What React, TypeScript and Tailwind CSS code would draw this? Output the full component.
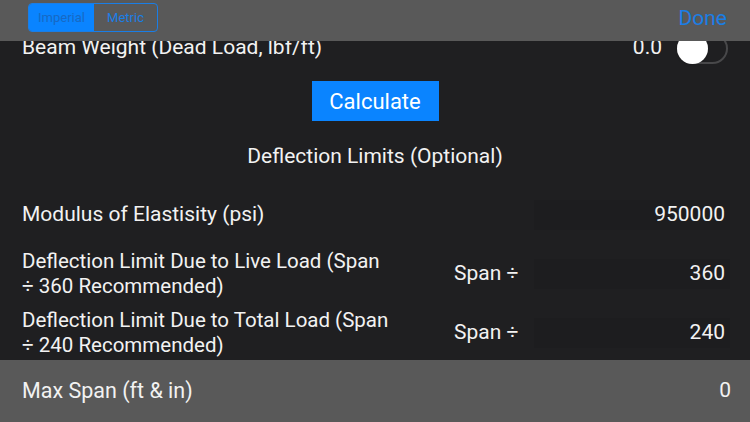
import React from 'react'

const font = { fontFamily: 'Roboto, "Liberation Sans", sans-serif' }

function Toggle() {
  return (
    <div className="relative w-[51px] h-[31px] rounded-full border-2 border-[#48484a] bg-[#1f1f21]">
      <div className="absolute left-[-2px] top-[-2px] w-[31px] h-[31px] rounded-full bg-white shadow" />
    </div>
  )
}

function InputBox({ value }: { value: string }) {
  return (
    <div className="w-[196px] h-[30px] bg-[#1d1d1f] flex items-center justify-end pr-[5px]">
      {value}
    </div>
  )
}

function LimitRow({ line1, line2, value, className }: { line1: string; line2: string; value: string; className?: string }) {
  return (
    <div className={`flex items-center ${className ?? ''}`}>
      <div className="w-[432px] leading-[25px] text-[20.5px]">
        {line1}
        <br />
        {line2}
      </div>
      <div className="w-[80px]">Span ÷</div>
      <InputBox value={value} />
    </div>
  )
}

export default function App() {
  return (
    <div className="w-[750px] h-[422px] flex flex-col text-[21px] text-[#f2f2f2] overflow-hidden" style={font}>
      <div className="h-[41px] bg-[#595959] flex items-start justify-between pl-[28px] pr-[23px] pt-[3px] z-10">
        <div className="flex h-[29px] rounded-[4px] border border-[#1a7ee6] overflow-hidden text-[13px]">
          <div className="w-[65px] bg-[#0a84ff] text-[#1769c4] flex items-center justify-center">Imperial</div>
          <div className="w-[63px] text-[#1a7ee6] flex items-center justify-center">Metric</div>
        </div>
        <div className="text-[#1a7ee6] text-[21px] leading-[30px]">Done</div>
      </div>

      <div className="flex-1 bg-[#1f1f21] overflow-hidden pl-[22px] pr-[20px]">
        <div className="mt-[-10px] h-[34px] flex items-center justify-between">
          <span>Beam Weight (Dead Load, lbf/ft)</span>
          <div className="flex items-center gap-[15px] mr-[2px]">
            <span>0.0</span>
            <Toggle />
          </div>
        </div>

        <div className="mt-[16px] flex justify-center pr-[2px]">
          <button className="w-[127px] h-[40px] bg-[#0a84ff] text-white text-[22px]">Calculate</button>
        </div>

        <div className="mt-[23px] leading-[24px] text-center pr-[2px]">Deflection Limits (Optional)</div>

        <div className="mt-[31px] flex items-center justify-between">
          <span>Modulus of Elastisity (psi)</span>
          <InputBox value="950000" />
        </div>

        <LimitRow className="mt-[18px]" line1="Deflection Limit Due to Live Load (Span" line2="÷ 360 Recommended)" value="360" />
        <LimitRow className="mt-[9px]" line1="Deflection Limit Due to Total Load (Span" line2="÷ 240 Recommended)" value="240" />
      </div>

      <div className="h-[62px] bg-[#595959] flex items-center justify-between pl-[22px] pr-[19px]">
        <span className="text-[21.5px]">Max Span (ft &amp; in)</span>
        <span>0</span>
      </div>
    </div>
  )
}
